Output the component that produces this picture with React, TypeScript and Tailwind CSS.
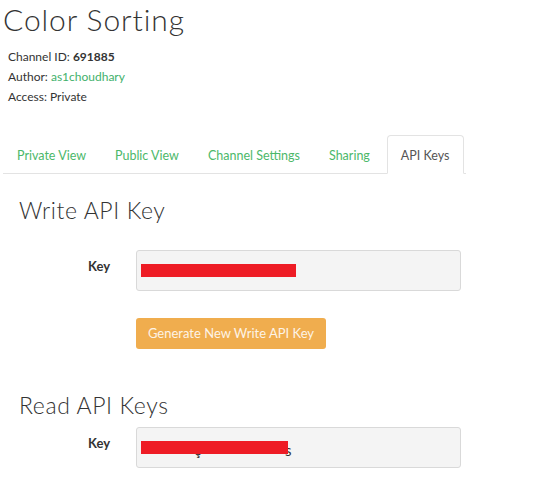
import React from "react";

const tabs = ["Private View", "Public View", "Channel Settings", "Sharing", "API Keys"];

function KeyRow({ bar, tail }: { bar: number; tail?: boolean }) {
  return (
    <div className="flex items-start">
      <div className="w-[117px] shrink-0 pr-[26px] pt-[8px] text-right text-[13px] font-bold leading-[16px] text-[#333]">
        Key
      </div>
      <div className="relative h-[41px] w-[325px] shrink-0 rounded-[3px] border border-[#d9d9d9] bg-[#f4f4f4]">
        {tail && (
          <>
            <span className="absolute left-[148px] top-[11px] text-[15px] text-[#333]">s</span>
            <span className="absolute left-[57px] top-[10px] text-[15px] text-[#333]">ç</span>
          </>
        )}
        <div
          className="absolute left-[4px] top-[13px] h-[13px] bg-[#ee1c25]"
          style={{ width: bar }}
        />
      </div>
    </div>
  );
}

export default function App() {
  return (
    <div className="h-[494px] w-[549px] overflow-hidden bg-white font-['Lato',sans-serif] text-[#333]">
      <h1 className="pl-[3px] pt-[1px] text-[30px] font-light leading-[36px] tracking-[0.9px] text-[#333]">
        Color Sorting
      </h1>

      <div className="mt-[10px] pl-[8px] text-[12px] leading-[20px]">
        <p>
          Channel ID: <span className="font-bold">691885</span>
        </p>
        <p>
          Author: <span className="text-[#3fb16b]">as1choudhary</span>
        </p>
        <p>Access: Private</p>
      </div>

      <ul className="ml-[3px] mt-[28px] flex w-[463px] whitespace-nowrap border-b border-[#e3e3e3] text-[12.5px] leading-[18px]">
        {tabs.map((t) => {
          const active = t === "API Keys";
          return (
            <li
              key={t}
              className={
                active
                  ? "-mb-px ml-[2px] shrink-0 rounded-t-[4px] border border-[#e3e3e3] border-b-white bg-white px-[13px] pb-[8px] pt-[11px] text-[#555]"
                  : "mr-[1px] shrink-0 px-[14px] pb-[8px] pt-[12px] text-[#4cb86a]"
              }
            >
              {t}
            </li>
          );
        })}
      </ul>

      <div className="pl-[19px]">
        <h2 className="mt-[21px] text-[23px] font-light leading-[30px] tracking-[0.6px] text-[#333]">Write API Key</h2>
        <div className="mt-[25px]">
          <KeyRow bar={155} />
        </div>
        <div className="ml-[117px] mt-[27px]">
          <button className="h-[31px] w-[190px] rounded-[3px] bg-[#f0ad4e] text-[13px] text-[#fdf3e6]">
            Generate New Write API Key
          </button>
        </div>
        <h2 className="mt-[41px] text-[23px] font-light leading-[30px] tracking-[0.6px] text-[#333]">Read API Keys</h2>
        <div className="mt-[7px]">
          <KeyRow bar={147} tail />
        </div>
      </div>
    </div>
  );
}
